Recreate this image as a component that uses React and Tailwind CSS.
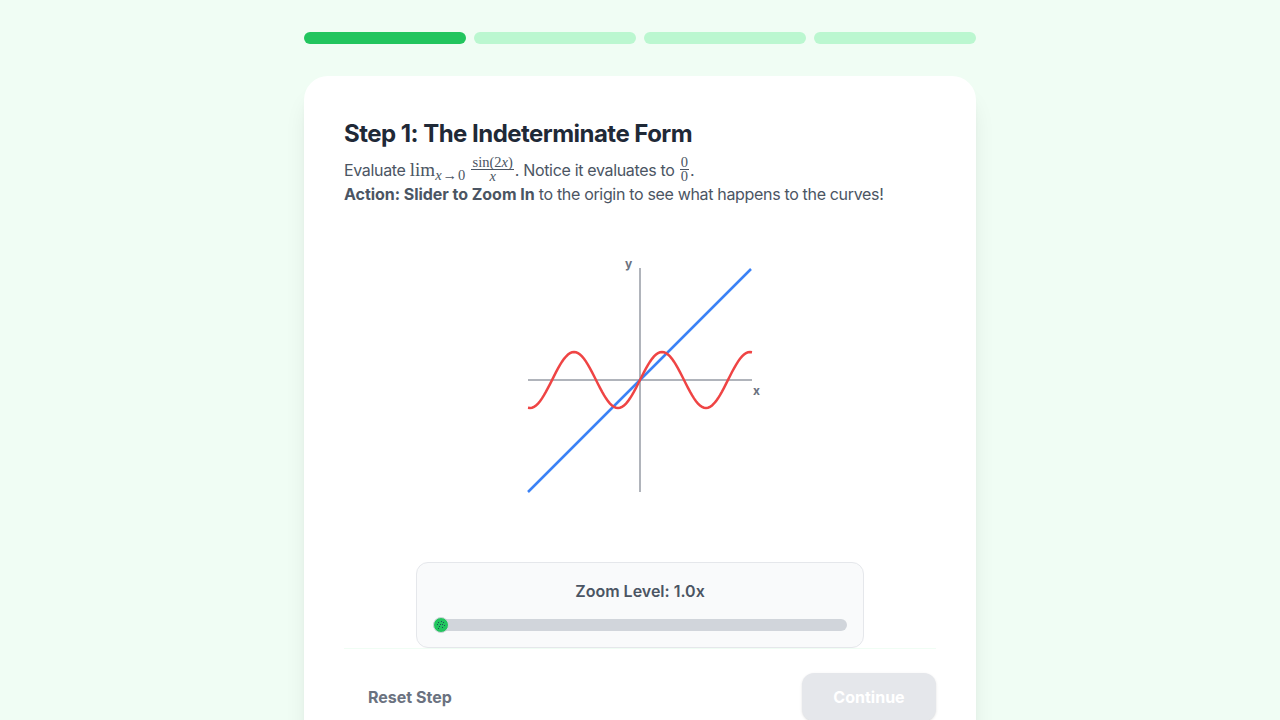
import React from "react";

const sinePath = (() => {
  const pts = [];
  for (let dx = -112; dx <= 112; dx += 2) {
    const y = 112 - 28 * Math.sin((2 * dx) / 28);
    pts.push(`${dx === -112 ? "M" : "L"}${dx + 112} ${y.toFixed(2)}`);
  }
  return pts.join(" ");
})();

const tex = "font-['Liberation_Serif',serif] tracking-normal";

function Frac({ top, bottom }) {
  return (
    <span className={`inline-flex flex-col items-center align-middle text-[14.5px] leading-[13px] ${tex} mx-[1px] -mt-[4px]`}>
      <span className="px-[1px]">{top}</span>
      <span className="w-full border-t border-[#4b5563]" />
      <span className="px-[1px]">{bottom}</span>
    </span>
  );
}

export default function App() {
  return (
    <div className="h-screen overflow-hidden bg-[#f0fdf4] font-['Inter',sans-serif]">
      <div className="mx-auto w-[672px] pt-8">
        <div className="mb-8 flex gap-2">
          <div className="h-3 flex-1 rounded-full bg-[#22c55e]" />
          <div className="h-3 flex-1 rounded-full bg-[#bbf7d0]" />
          <div className="h-3 flex-1 rounded-full bg-[#bbf7d0]" />
          <div className="h-3 flex-1 rounded-full bg-[#bbf7d0]" />
        </div>

        <div className="rounded-3xl bg-white px-10 pb-10 pt-[42px] shadow-xl">
          <h2 className="mb-2 text-2xl font-bold tracking-[-0.53px] text-[#1f2937]">Step 1: The Indeterminate Form</h2>
          <div className="text-base tracking-[-0.33px] text-[#4b5563]">
            <p className="h-6 whitespace-nowrap leading-6">
              Evaluate{" "}
              <span className={`${tex} text-[19px]`}>
                lim
                <sub className="text-[14.5px]">
                  <i>x</i>
                  <span className="px-[1px]">→</span>0
                </sub>
              </span>{" "}
              <span className="ml-[1px]" />
              <Frac top={<>sin(2<i>x</i>)</>} bottom={<i>x</i>} />. Notice it evaluates to <Frac top="0" bottom="0" />.
            </p>
            <p className="leading-6">
              <strong className="font-bold tracking-[-0.04px]">Action: Slider to Zoom In</strong> to the origin to see what happens to the curves!
            </p>
          </div>

          <div className="mt-4 flex justify-center">
            <svg width="260" height="300" viewBox="0 0 260 300" className="block">
              <g transform="translate(18 46)">
                <line x1="0" y1="112" x2="224" y2="112" stroke="#b0b4bb" strokeWidth="2" />
                <line x1="112" y1="0" x2="112" y2="224" stroke="#b0b4bb" strokeWidth="2" />
                <line x1="0" y1="224" x2="223" y2="1" stroke="#3b82f6" strokeWidth="2.5" />
                <path d={sinePath} fill="none" stroke="#ef4444" strokeWidth="2.5" />
                <text x="225" y="127" fontSize="12" fontWeight="700" fill="#6b7280">x</text>
                <text x="97" y="0" fontSize="12" fontWeight="700" fill="#6b7280">y</text>
              </g>
            </svg>
          </div>

          <div className="mx-auto mt-10 w-[448px] rounded-xl border border-[#e5e7eb] bg-[#f9fafb] px-4 pb-4 pt-4">
            <div className="mb-4 text-center text-base font-semibold leading-6 text-[#4b5563]">Zoom Level: 1.0x</div>
            <div className="relative h-3 rounded-full bg-[#d1d5db]">
              <svg width="18" height="18" viewBox="0 0 18 18" className="absolute -top-[3px] -left-[1px]">
                <circle cx="9" cy="9" r="7.5" fill="#22c55e" stroke="#d1d5db" strokeWidth="1" />
                <g fill="#1f4d5a">
                  <rect x="6" y="6" width="1" height="1" />
                  <rect x="9" y="5" width="1" height="1" />
                  <rect x="11" y="6" width="1" height="1" />
                  <rect x="5" y="8" width="1" height="1" />
                  <rect x="8" y="8" width="1" height="1" />
                  <rect x="10" y="8" width="1" height="1" />
                  <rect x="12" y="9" width="1" height="1" />
                  <rect x="7" y="10" width="1" height="1" />
                  <rect x="10" y="11" width="1" height="1" />
                  <rect x="6" y="12" width="1" height="1" />
                </g>
              </svg>
            </div>
          </div>

          <div className="flex items-center justify-between border-t border-[#f0fdf4] pt-6">
            <button className="px-6 py-3 text-base font-bold text-[#6b7280]">Reset Step</button>
            <button className="w-[134px] rounded-xl bg-[#e5e7eb] py-3 text-base font-bold text-white shadow-sm">Continue</button>
          </div>
        </div>
      </div>
    </div>
  );
}
